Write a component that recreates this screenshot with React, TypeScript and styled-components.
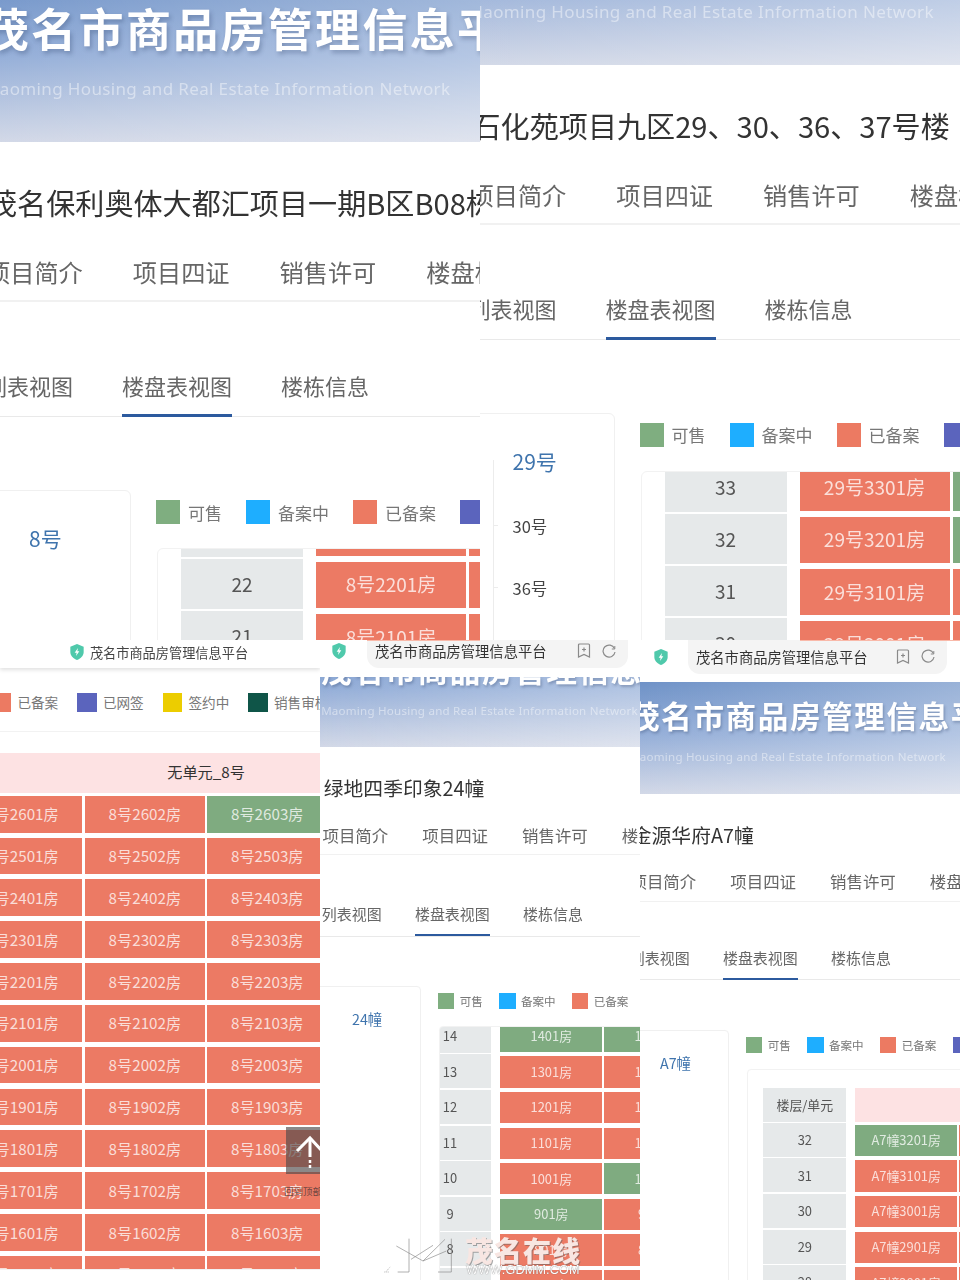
import React from "react";
import styled, { createGlobalStyle } from "styled-components";

const Global = createGlobalStyle`
  html, body { margin: 0; padding: 0; background: #fff; }
  body { font-family: "Noto Sans CJK SC", "Noto Sans", sans-serif; }
`;

const Root = styled.div`
  position: relative;
  width: 960px;
  height: 1280px;
  overflow: hidden;
  display: flex;
  flex-wrap: wrap;
`;

const Panel = styled.section<{ $w: number }>`
  position: relative;
  width: ${(p) => p.$w}px;
  height: 640px;
  overflow: hidden;
  background: #fff;
  filter: blur(0.35px);
`;

const Page = styled.div<{ $scale: number; $x: number; $y: number }>`
  zoom: ${(p) => p.$scale};
  width: 1200px;
  margin-left: ${(p) => p.$x / p.$scale - 30}px;
  margin-top: ${(p) => p.$y / p.$scale}px;
`;

const Banner = styled.header`
  height: 164px;
  box-sizing: border-box;
  padding: 18px 0 0 14px;
  background: linear-gradient(90deg, rgba(255, 255, 255, 0) 0, rgba(255, 255, 255, 0.32) 44%),
    linear-gradient(180deg, #6c90c6 0%, #94aed8 48%, #b6c5e0 76%, #d2d8e7 100%);
  overflow: hidden;
`;

const BannerTitle = styled.div`
  font-size: 45px;
  line-height: 64px;
  font-weight: 700;
  letter-spacing: 2.3px;
  color: #fff;
  white-space: nowrap;
  text-shadow: 2px 3px 4px rgba(40, 60, 100, 0.3);
`;

const BannerSub = styled.div`
  margin-top: 14px;
  font-family: "Noto Sans", sans-serif;
  font-size: 17px;
  line-height: 30px;
  letter-spacing: 0.36px;
  color: rgba(255, 255, 255, 0.45);
  white-space: nowrap;
`;

const Heading = styled.h1`
  margin: 0;
  padding: 40px 0 0 18px;
  font-size: 29.1px;
  line-height: 40px;
  font-weight: 400;
  color: #333;
  white-space: nowrap;
`;

const TabBar = styled.nav`
  display: flex;
  gap: 50px;
  padding: 33px 0 11px 16px;
  border-bottom: 2px solid #f1f1f1;
`;

const Tab = styled.span`
  font-size: 24.2px;
  line-height: 34px;
  color: #666;
  white-space: nowrap;
`;

const ViewTabs = styled.nav<{ $shift: number }>`
  display: flex;
  gap: 49px;
  margin-top: ${(p) => 68 + p.$shift}px;
  padding-left: 15px;
  border-bottom: 1px solid #e9e9e9;
`;

const ViewTab = styled.span<{ $active?: boolean }>`
  font-size: 22px;
  line-height: 30px;
  padding-bottom: 14px;
  margin-bottom: -1px;
  color: #666;
  white-space: nowrap;
  border-bottom: 3px solid ${(p) => (p.$active ? "#2c5a9e" : "transparent")};
`;

const Body = styled.div`
  display: flex;
  margin-top: 73px;
  align-items: flex-start;
`;

const Sidebar = styled.aside`
  flex: none;
  box-sizing: border-box;
  width: 161px;
  height: 860px;
  border: 1px solid #f0f0f0;
  border-radius: 6px;
  padding: 31px 0 0 38px;
`;

const Tree = styled.div<{ $line?: boolean }>`
  position: relative;
  padding-left: 20px;
  &::before {
    content: "";
    display: ${(p) => (p.$line ? "block" : "none")};
    position: absolute;
    left: 0;
    top: 15px;
    bottom: -300px;
    width: 1px;
    background: #ececec;
  }
`;

const TreeItem = styled.div<{ $active?: boolean; $line?: boolean }>`
  position: relative;
  height: ${(p) => (p.$active ? 65 : 62)}px;
  font-size: ${(p) => (p.$active ? 21 : 16.5)}px;
  line-height: 32px;
  color: ${(p) => (p.$active ? "#3f74ad" : "#444")};
  &::before {
    content: "";
    display: ${(p) => (p.$line ? "block" : "none")};
    position: absolute;
    left: -20px;
    top: 15px;
    width: 5px;
    height: 1px;
    background: #ececec;
  }
`;

const Main = styled.div`
  margin-left: 25px;
  padding-top: 10px;
  flex: none;
  width: 960px;
`;

const Legend = styled.div`
  display: flex;
  gap: 24px;
  height: 24px;
`;

const LegendItem = styled.div`
  display: flex;
  align-items: center;
  gap: 8px;
  font-size: 17px;
  color: #777;
  white-space: nowrap;
`;

const Swatch = styled.i<{ $c: string }>`
  display: block;
  width: 24px;
  height: 24px;
  background: ${(p) => p.$c};
`;

const TableCard = styled.div`
  margin: 24px 0 0 1px;
  border: 1px solid #f2f2f2;
  border-radius: 6px;
  height: 671px;
  overflow: hidden;
  display: flex;
  flex-direction: column;
`;

const Viewport = styled.div<{ $inset: number }>`
  margin-top: ${(p) => p.$inset}px;
  flex: 1;
  min-height: 0;
  overflow: hidden;
`;

const Grid = styled.div<{ $sx: number; $sy: number }>`
  margin-left: ${(p) => 23 - p.$sx}px;
  margin-top: ${(p) => p.$sy}px;
`;

const Row = styled.div`
  display: flex;
  height: 52.3px;
`;

const HeadRow = styled.div`
  display: flex;
  height: 51px;
`;

const FloorCell = styled.div`
  flex: none;
  box-sizing: border-box;
  width: 122px;
  height: 50px;
  margin-right: 13px;
  padding-bottom: 1px;
  background: #e6e9ea;
  color: #555;
  font-size: 19px;
  display: flex;
  align-items: center;
  justify-content: center;
`;

const UnitCell = styled.div`
  flex: none;
  box-sizing: border-box;
  width: 609px;
  height: 50px;
  padding-bottom: 3px;
  background: #fde2e3;
  color: #333;
  font-size: 19px;
  display: flex;
  align-items: center;
  justify-content: center;
`;

const Room = styled.div<{ $green: boolean }>`
  flex: none;
  box-sizing: border-box;
  width: 150px;
  height: 46px;
  margin: 3px 3px 0 0;
  padding-bottom: 2px;
  background: ${(p) => (p.$green ? "#7fab80" : "#ec7a64")};
  color: rgba(255, 255, 255, 0.76);
  font-size: 19px;
  display: flex;
  align-items: center;
  justify-content: center;
  white-space: nowrap;
`;

const Bar = styled.div<{ $h: number }>`
  position: relative;
  z-index: 2;
  height: ${(p) => p.$h}px;
  background: #fff;
`;

const CenterBar = styled(Bar)`
  box-sizing: border-box;
  display: flex;
  align-items: center;
  justify-content: center;
  gap: 5px;
  padding: 0 3px 4px 0;
  font-size: 13.2px;
  color: #444;
  box-shadow: 0 2px 4px rgba(0, 0, 0, 0.12);
`;

const AddressRow = styled(Bar)<{ $pad: number }>`
  display: flex;
  align-items: flex-start;
  padding-left: ${(p) => p.$pad}px;
`;

const ShieldBox = styled.span<{ $top: number }>`
  width: 16px;
  height: 18px;
  margin-top: ${(p) => p.$top}px;
  display: block;
  flex: none;
`;

const Pill = styled.div<{ $h: number; $ml: number; $w: number; $lift: number }>`
  margin-left: ${(p) => p.$ml}px;
  width: ${(p) => p.$w}px;
  height: ${(p) => p.$h}px;
  box-sizing: border-box;
  background: #f4f4f4;
  border-radius: 0 0 12px 12px;
  display: flex;
  align-items: center;
  padding: 0 0 ${(p) => p.$lift}px 8px;
  font-size: 14.3px;
  color: #333;
  white-space: nowrap;
`;

const PillIcons = styled.div`
  margin-left: auto;
  margin-right: 12px;
  display: flex;
  gap: 11px;
  align-items: center;
`;

const EdgeTint = styled.div<{ $l: number; $w: number }>`
  position: absolute;
  z-index: 3;
  top: 0;
  left: ${(p) => p.$l}px;
  width: ${(p) => p.$w}px;
  height: 1px;
  background: #f9b9a9;
`;

const TopButton = styled.div`
  position: absolute;
  z-index: 3;
  right: 0;
  top: 487px;
  width: 34px;
  height: 47px;
  background: rgba(80, 74, 74, 0.66);
`;

const TopLabel = styled.div`
  position: absolute;
  z-index: 3;
  right: -2px;
  top: 544px;
  font-size: 9.5px;
  line-height: 14px;
  color: rgba(60, 50, 50, 0.75);
  white-space: nowrap;
`;

const Watermark = styled.div`
  position: absolute;
  z-index: 5;
  left: 383px;
  top: 1236px;
  display: flex;
  align-items: flex-start;
  pointer-events: none;
`;

const MarkText = styled.div`
  margin-left: 5px;
  width: 116px;
  text-align: center;
`;

const MarkName = styled.div`
  font-size: 28px;
  line-height: 29px;
  font-weight: 900;
  letter-spacing: 1px;
  color: #f8e6e2;
  white-space: nowrap;
  text-shadow: 1px 1px 0 rgba(100, 100, 100, 0.55);
`;

const MarkUrl = styled.div`
  margin-top: -2px;
  font-family: "Liberation Sans", sans-serif;
  font-size: 12.6px;
  line-height: 14px;
  letter-spacing: 0.2px;
  color: #fff;
  white-space: nowrap;
  text-shadow: 0 0 1px #555;
`;

const Shield = () => (
  <svg width="16" height="18" viewBox="0 0 24 26">
    <path d="M12 1 L22 5 V13 C22 19 17 23 12 25 C7 23 2 19 2 13 V5 Z" fill="#4fc9ab" />
    <path d="M13.5 7 L8.5 14 H11.5 L10.5 19 L15.5 12 H12.5 Z" fill="#fff" />
  </svg>
);

const BookmarkPlus = () => (
  <svg width="14" height="15" viewBox="0 0 14 15" fill="none" stroke="#8a8a8a" strokeWidth="1.2">
    <path d="M2.5 1h9a1 1 0 0 1 1 1v12l-5.500-2.500L1.500 14V2a1 1 0 0 1 1-1z" />
    <path d="M7 4.500v4M5 6.500h4" />
  </svg>
);

const Reload = () => (
  <svg width="14" height="14" viewBox="0 0 14 14" fill="none" stroke="#8a8a8a" strokeWidth="1.2">
    <path d="M12.500 4.500A6 6 0 1 0 13 8" />
    <path d="M12.800 2v3h-3" strokeWidth="1" />
  </svg>
);

const legend: [string, string][] = [
  ["可售", "#7fae80"],
  ["备案中", "#1eaeff"],
  ["已备案", "#ec7a62"],
  ["已网签", "#5b64bd"],
  ["签约中", "#eccd00"],
  ["销售审核", "#0f5548"],
];

interface ShotProps {
  scale: number;
  x: number;
  y: number;
  title: string;
  prefix: string;
  buildings: string[];
  floors: number[];
  green?: string[];
  head?: boolean;
  sx?: number;
  sy?: number;
  inset?: number;
  shift?: number;
}

const Shot = ({ scale, x, y, title, prefix, buildings, floors, green = [], head, sx = 0, sy = 0, inset = 0, shift = 0 }: ShotProps) => (
  <Page $scale={scale} $x={x} $y={y}>
    <Banner>
      <BannerTitle>茂名市商品房管理信息平台</BannerTitle>
      <BannerSub>Maoming Housing and Real Estate Information Network</BannerSub>
    </Banner>
    <Heading>{title}</Heading>
    <TabBar>
      <Tab>项目简介</Tab>
      <Tab>项目四证</Tab>
      <Tab>销售许可</Tab>
      <Tab>楼盘标</Tab>
    </TabBar>
    <ViewTabs $shift={shift}>
      <ViewTab>列表视图</ViewTab>
      <ViewTab $active>楼盘表视图</ViewTab>
      <ViewTab>楼栋信息</ViewTab>
    </ViewTabs>
    <Body>
      <Sidebar>
        <Tree $line={buildings.length > 1}>
          {buildings.map((b, i) => (
            <TreeItem key={b} $active={i === 0} $line={buildings.length > 1 && i > 0}>
              {b}
            </TreeItem>
          ))}
        </Tree>
      </Sidebar>
      <Main>
        <Legend>
          {legend.map(([t, c]) => (
            <LegendItem key={t}>
              <Swatch $c={c} />
              {t}
            </LegendItem>
          ))}
        </Legend>
        <TableCard>
          <Viewport $inset={inset}>
            <Grid $sx={sx} $sy={sy}>
              {head && (
                <HeadRow>
                  <FloorCell>楼层/单元</FloorCell>
                  <UnitCell>无单元_{buildings[0]}</UnitCell>
                </HeadRow>
              )}
              {floors.map((f) => (
                <Row key={f}>
                  <FloorCell>{f}</FloorCell>
                  {[1, 2, 3, 4].map((c) => (
                    <Room key={c} $green={green.includes(`${f}-${c}`)}>
                      {prefix}
                      {f}0{c}房
                    </Room>
                  ))}
                </Row>
              ))}
            </Grid>
          </Viewport>
        </TableCard>
      </Main>
    </Body>
  </Page>
);

const range = (from: number, to: number) => {
  const out: number[] = [];
  for (let f = from; f >= to; f--) out.push(f);
  return out;
};

export default function App() {
  return (
    <Root>
      <Global />
      <Panel $w={480}>
        <Shot
          scale={1}
          x={0}
          y={-22}
          title="茂名保利奥体大都汇项目一期B区B08栋"
          prefix="8号"
          buildings={["8号"]}
          floors={range(23, 20)}
          sy={-42.500}
        />
      </Panel>
      <Panel $w={480}>
        <Shot
          scale={1}
          x={3.5}
          y={-99.500}
          title="石化苑项目九区29、30、36、37号楼"
          prefix="29号"
          buildings={["29号", "30号", "36号"]}
          floors={range(33, 30)}
          green={["33-2", "32-2"]}
          sy={-10}
        />
      </Panel>
      <Panel $w={320}>
        <CenterBar $h={28}>
          <Shield />
          茂名市商品房管理信息平台
        </CenterBar>
        <Shot
          scale={0.8}
          x={-290.500}
          y={-392}
          title="茂名保利奥体大都汇项目一期B区B08栋"
          prefix="8号"
          buildings={["8号"]}
          floors={range(26, 15)}
          green={["26-3"]}
          head
          sy={25.500}
        />
        <TopButton>
          <svg width="34" height="47" viewBox="0 0 34 47" fill="none" stroke="#fff" strokeWidth="3">
            <path d="M11 24 L24 11 L36 24" />
            <path d="M24 11 V30" />
            <path d="M24 33 V36 M24 38 V41" strokeWidth="2.5" />
          </svg>
        </TopButton>
        <TopLabel>回到顶部</TopLabel>
      </Panel>
      <Panel $w={320}>
        <AddressRow $h={37} $pad={11}>
          <ShieldBox $top={1}>
            <Shield />
          </ShieldBox>
          <Pill $h={28} $ml={20} $w={261} $lift={7}>
            茂名市商品房管理信息平台
            <PillIcons>
              <BookmarkPlus />
              <Reload />
            </PillIcons>
          </Pill>
        </AddressRow>
        <EdgeTint $l={47} $w={113} />
        <Shot
          scale={0.68}
          x={12}
          y={-41.500}
          title="绿地四季印象24幢"
          prefix=""
          buildings={["24幢"]}
          floors={range(14, 6)}
          green={["14-1", "14-2", "9-1", "10-2"]}
          sx={69}
          sy={-12.500}
          inset={1}
          shift={4}
        />
      </Panel>
      <Panel $w={320}>
        <AddressRow $h={42} $pad={13}>
          <ShieldBox $top={7}>
            <Shield />
          </ShieldBox>
          <Pill $h={34} $ml={19} $w={259} $lift={2}>
            茂名市商品房管理信息平台
            <PillIcons>
              <BookmarkPlus />
              <Reload />
            </PillIcons>
          </Pill>
        </AddressRow>
        <EdgeTint $l={160} $w={160} />
        <Shot
          scale={0.68}
          x={0}
          y={0}
          title="金源华府A7幢"
          prefix="A7幢"
          buildings={["A7幢"]}
          floors={range(32, 26)}
          green={["32-1"]}
          head
          sy={26}
        />
      </Panel>
      <Watermark>
        <svg width="77" height="42" viewBox="0 0 231 126" fill="none">
          <path d="M40 30 L120 75 M78 8 V108 H44 M84 70 L150 28 M120 75 L190 45 M186 10 L120 75 M165 108 H205 V8" stroke="#8a8a8a" strokeWidth="2" />
          <path d="M10 106 L22 92 M4 108 H18" stroke="#8a8a8a" strokeWidth="2" strokeDasharray="3 3" />
        </svg>
        <MarkText>
          <MarkName>茂名在线</MarkName>
          <MarkUrl>WWW.GDMM.COM</MarkUrl>
        </MarkText>
      </Watermark>
    </Root>
  );
}
